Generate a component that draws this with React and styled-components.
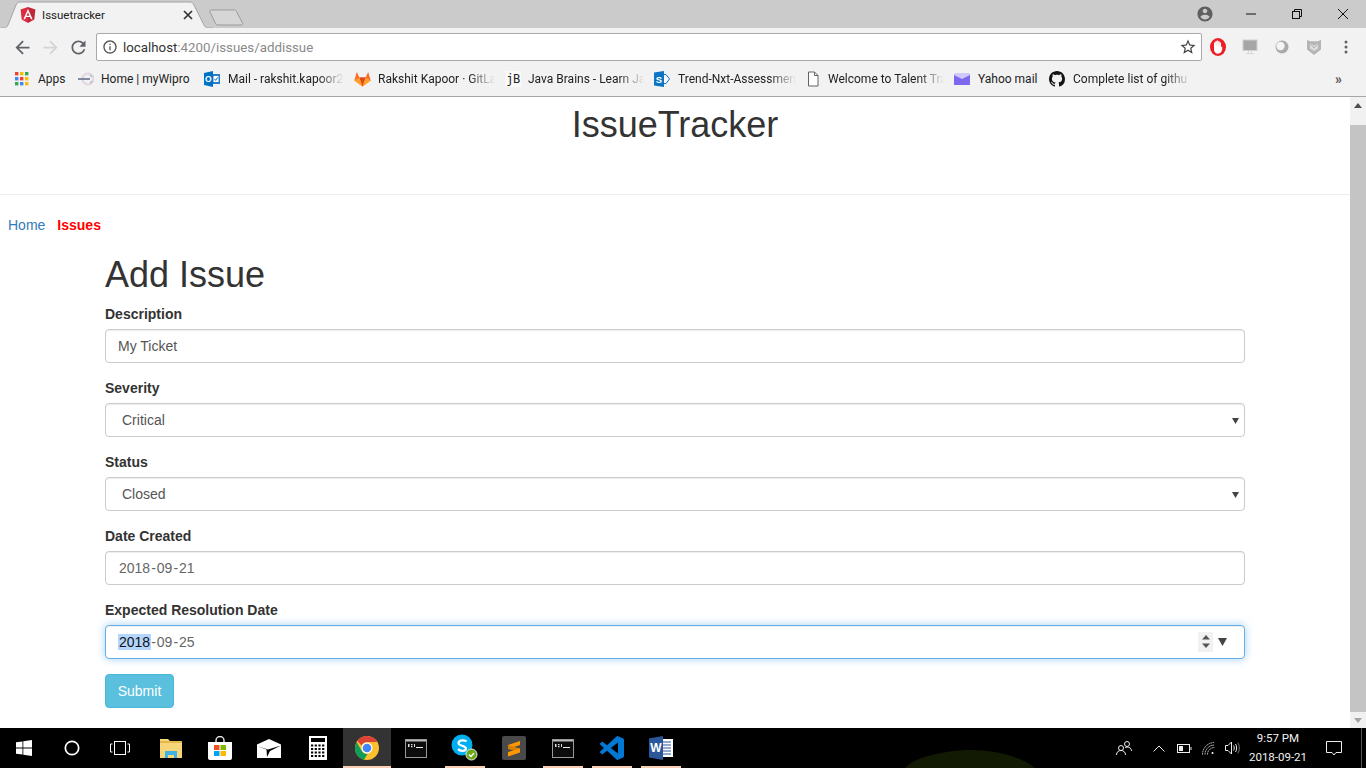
import React from 'react';
import styled, { createGlobalStyle } from 'styled-components';

const GlobalStyle = createGlobalStyle`
  html, body {
    margin: 0;
    height: 100%;
    overflow: hidden;
    font-family: "Liberation Sans", Arial, sans-serif;
    font-size: 14px;
    color: #333;
  }
  * { box-sizing: border-box; }
`;

const chromeFont = `Roboto, "Open Sans", sans-serif`;

const Screen = styled.div`
  height: 768px;
  display: flex;
  flex-direction: column;
  overflow: hidden;
  background: #fff;
`;

/* browser chrome */
const TabStrip = styled.div`
  flex: none;
  height: 28px;
  background: #cbcbcb;
  display: flex;
  align-items: flex-end;
  padding-left: 1px;
`;

const Tab = styled.div`
  position: relative;
  width: 212px;
  height: 27px;
  display: flex;
  align-items: center;
  padding: 0 20px 0 19px;
  font: 11.5px ${chromeFont};
  color: #222;
`;

const TabShape = styled.svg`
  position: absolute;
  left: 0;
  top: 0;
`;

const TabLabel = styled.span`
  position: relative;
  flex: 1;
  margin-left: 6px;
`;

const TabIcon = styled.svg`
  position: relative;
  flex: none;
`;

const NewTab = styled.svg`
  flex: none;
  margin: 0 0 2px -5px;
`;

const WindowControls = styled.div`
  margin-left: auto;
  align-self: flex-start;
  display: flex;
  align-items: center;
  height: 28px;
`;

const WinButton = styled.div`
  width: 46px;
  height: 26px;
  display: flex;
  align-items: center;
  justify-content: center;
`;

const Toolbar = styled.div`
  flex: none;
  height: 34px;
  padding-top: 4px;
  background: #f2f2f2;
  display: flex;
  align-items: center;
`;

const NavButton = styled.div`
  flex: none;
  width: 28px;
  height: 28px;
  display: flex;
  align-items: center;
  justify-content: center;
`;

const NavGroup = styled.div`
  display: flex;
  padding: 0 4px 0 8px;
`;

const Omnibox = styled.div`
  flex: none;
  width: 1106px;
  height: 28px;
  background: #fff;
  border: 1px solid #a9a9a9;
  border-radius: 2px;
  display: flex;
  align-items: center;
  padding: 0 4px 0 5px;
  font: 13.3px ${chromeFont};
  color: #333;
`;

const Url = styled.span`
  margin-left: 5px;
  flex: 1;
  span { color: #8a8a8a; }
`;

const Extensions = styled.div`
  display: flex;
  align-items: center;
`;

const ExtButton = styled.div`
  width: 32px;
  height: 28px;
  display: flex;
  align-items: center;
  justify-content: center;
`;

const BookmarkBar = styled.div`
  flex: none;
  height: 35px;
  background: #f2f2f2;
  border-bottom: 1px solid #a6a6a6;
  display: flex;
  align-items: center;
  padding: 0 0 0 15px;
  font: 12px ${chromeFont};
  color: #222;
`;

const Bookmark = styled.div`
  flex: none;
  width: ${p => p.$width}px;
  padding-right: ${p => (p.$fade ? 10 : 0)}px;
  display: flex;
  align-items: center;
  gap: ${p => p.$gap || 8}px;
`;

const BookmarkIcon = styled.span`
  flex: none;
  display: flex;
`;

const BookmarkText = styled.span`
  flex: 1;
  min-width: 0;
  white-space: nowrap;
  ${p => p.$fade && `mask-image: linear-gradient(to right, #000 78%, transparent 100%);`}
`;

const JbIcon = styled.span`
  width: 16px;
  height: 16px;
  font: 12px "DejaVu Sans Mono", monospace;
  color: #222;
  background: #fafafa;
  text-align: center;
  line-height: 16px;
  letter-spacing: -0.5px;
`;

const More = styled.div`
  margin-left: auto;
  margin-right: 24px;
  font: 700 14px ${chromeFont};
  color: #555;
`;

/* page */
const Viewport = styled.div`
  flex: 1;
  min-height: 0;
  display: flex;
`;

const Page = styled.main`
  flex: 1;
  min-width: 0;
`;

const Scrollbar = styled.div`
  flex: none;
  width: 16px;
  background: #f1f1f1;
  display: flex;
  flex-direction: column;
`;

const ScrollArrow = styled.div`
  flex: none;
  height: 16px;
  display: flex;
  align-items: center;
  justify-content: center;
`;

const ScrollThumb = styled.div`
  flex: none;
  height: 587px;
  margin: 12px 0 auto;
  background: #c4c4c4;
`;

const Header = styled.header`
  height: 98px;
  border-bottom: 1px solid #eee;
  padding-top: 8px;
`;

const Title = styled.h1`
  margin: 0;
  font-size: 36px;
  font-weight: 400;
  line-height: 39.6px;
  text-align: center;
`;

const SiteNav = styled.nav`
  display: flex;
  gap: 12px;
  margin: 20px 0;
  padding-left: 8px;
  line-height: 20px;
`;

const NavLink = styled.a`
  color: ${p => (p.$current ? '#f00' : '#337ab7')};
  font-weight: ${p => (p.$current ? 700 : 400)};
`;

const Container = styled.section`
  width: 1140px;
  margin: 0 auto;
`;

const FormTitle = styled.h2`
  margin: 0 0 9px;
  font-size: 36px;
  font-weight: 400;
  line-height: 39.6px;
`;

const Group = styled.div`
  margin-bottom: 15px;
`;

const Label = styled.label`
  display: block;
  margin-bottom: 5px;
  font-weight: 700;
  line-height: 20px;
`;

const Input = styled.input`
  display: block;
  width: 100%;
  height: 34px;
  padding: 6px 12px;
  font: 14px "Liberation Sans", Arial, sans-serif;
  color: #555;
  background: #fff;
  border: 1px solid #ccc;
  border-radius: 4px;
  box-shadow: inset 0 1px 1px rgba(0, 0, 0, .075);
  outline: none;
`;

const SelectWrap = styled.div`
  position: relative;
`;

const Select = styled.select`
  display: block;
  width: 100%;
  height: 34px;
  padding: 6px 12px 6px 16px;
  font: 14px "Liberation Sans", Arial, sans-serif;
  color: #555;
  background: #fff;
  border: 1px solid #ccc;
  border-radius: 4px;
  box-shadow: inset 0 1px 1px rgba(0, 0, 0, .075);
  appearance: none;
  outline: none;
`;

const SelectArrow = styled.svg`
  position: absolute;
  right: 6px;
  top: 15px;
  pointer-events: none;
`;

const DateField = styled.div`
  height: 34px;
  display: flex;
  align-items: center;
  padding: 0 12px;
  color: #666;
  background: #fff;
  border: 1px solid ${p => (p.$focused ? '#66afe9' : '#ccc')};
  border-radius: 4px;
  box-shadow: ${p => (p.$focused
    ? 'inset 0 1px 1px rgba(0,0,0,.075), 0 0 8px rgba(102,175,233,.6)'
    : 'inset 0 1px 1px rgba(0,0,0,.075)')};
`;

const DatePart = styled.span`
  padding: 0 1px;
  line-height: 16px;
  ${p => p.$selected && `background: #b4d5fe; color: #111;`}
`;

const DateControls = styled.div`
  margin-left: auto;
  display: flex;
  align-items: center;
  gap: 5px;
  padding-right: 5px;
`;

const Spinner = styled.div`
  width: 15px;
  height: 20px;
  background: #f1f1f1;
  display: flex;
  align-items: center;
  justify-content: center;
`;

const Submit = styled.button`
  display: block;
  width: 69px;
  height: 34px;
  padding: 0;
  font: 14px "Liberation Sans", Arial, sans-serif;
  color: #fff;
  background: #5bc0de;
  border: 1px solid #46b8da;
  border-radius: 4px;
`;

/* windows taskbar */
const Taskbar = styled.footer`
  position: relative;
  flex: none;
  height: 40px;
  background: #000;
  display: flex;
  align-items: stretch;
  color: #fff;
`;

const Wallpaper = styled.svg`
  position: absolute;
  left: 900px;
  bottom: 0;
`;

const TaskGroup = styled.div`
  display: flex;
  margin-right: 3px;
`;

const TaskItem = styled.div`
  position: relative;
  width: 48px;
  margin-right: ${p => (p.$tight ? 0 : 1)}px;
  display: flex;
  align-items: center;
  justify-content: center;
  background: ${p => (p.$active ? '#333' : 'transparent')};

  ${p => p.$running && `
    &::after {
      content: "";
      position: absolute;
      left: ${p.$active ? 0 : 4}px;
      right: ${p.$active ? 0 : 4}px;
      bottom: 0;
      height: 2px;
      background: #f8cfb3;
    }
  `}
`;

const Tray = styled.div`
  position: relative;
  margin-left: auto;
  display: flex;
  align-items: center;
`;

const TrayIcon = styled.div`
  width: ${p => p.$width}px;
  padding-right: ${p => p.$inset || 0}px;
  display: flex;
  align-items: center;
  justify-content: center;
`;

const Clock = styled.div`
  width: 72px;
  text-align: center;
  font: 11.5px/19px ${chromeFont};
  color: #f2f2f2;
`;

const ShowDesktop = styled.div`
  width: 5px;
  align-self: stretch;
  border-left: 1px solid #555;
`;

const Arrow = ({ d, color }) => (
  <svg width="21" height="21" viewBox="0 0 24 24" fill={color}><path d={d} /></svg>
);

const BACK = 'M20 11H7.83l5.59-5.59L12 4l-8 8 8 8 1.41-1.41L7.83 13H20v-2z';
const FORWARD = 'M12 4l-1.41 1.41L16.17 11H4v2h12.17l-5.58 5.59L12 20l8-8z';
const RELOAD = 'M17.65 6.35C16.2 4.9 14.21 4 12 4c-4.42 0-7.99 3.58-7.99 8s3.57 8 7.99 8c3.73 0 6.84-2.55 7.73-6h-2.08c-.82 2.33-3.04 4-5.65 4-3.31 0-6-2.69-6-6s2.69-6 6-6c1.66 0 3.14.69 4.22 1.78L13 11h7V4l-2.35 2.35z';

const AngularIcon = () => (
  <TabIcon width="16" height="16" viewBox="0 0 16 16">
    <path d="M8 0 .6 2.6l1.1 9.8L8 16z" fill="#dd2c3f" />
    <path d="M8 0l7.4 2.6-1.1 9.8L8 16z" fill="#c0283a" />
    <path d="M8 2 3.4 12.3h1.7l.9-2.3h4l.9 2.3h1.7zM6.6 8.7 8 5.3l1.4 3.4z" fill="#fff" />
  </TabIcon>
);

const AppsIcon = () => {
  const colors = ['#ea4335', '#fbbc05', '#34a853', '#4285f4', '#ea4335', '#fbbc05', '#34a853', '#4285f4', '#fbbc05'];
  return (
    <svg width="14" height="14" viewBox="0 0 14 14">
      {colors.map((c, i) => (
        <rect key={i} x={(i % 3) * 5} y={Math.floor(i / 3) * 5} width="3.4" height="3.4" fill={c} />
      ))}
    </svg>
  );
};

const WiproIcon = () => (
  <svg width="16" height="16" viewBox="0 0 16 16">
    <circle cx="10" cy="8" r="5.5" fill="none" stroke="#e3d3df" strokeWidth="2" />
    <path d="M0 8h12" stroke="#6a6f90" strokeWidth="1.6" />
    <path d="M12 4l2 2M12 12l2-2" stroke="#9cc5cf" strokeWidth="1.4" />
  </svg>
);

const OutlookIcon = () => (
  <svg width="16" height="16" viewBox="0 0 16 16">
    <rect x="6" y="3" width="10" height="10" fill="#2a7cc7" />
    <rect x="9.5" y="5" width="5" height="6" fill="#fff" />
    <path d="M10.5 8l1.2 1.4 2-3" fill="none" stroke="#0072c6" strokeWidth="1" />
    <path d="M0 2l9-2v16L0 14z" fill="#0072c6" />
    <text x="4.4" y="11" fontSize="8.5" fontWeight="700" fontFamily="Liberation Sans" textAnchor="middle" fill="#fff">O</text>
  </svg>
);

const GitlabIcon = () => (
  <svg width="17" height="16" viewBox="0 0 17 16">
    <path d="M8.5 15.5 .3 9.6 2.8 1l2.6 5.6h6.2L14.200 1l2.500 8.600z" fill="#fc6d26" />
    <path d="M8.5 15.5 5.4 6.6h6.2z" fill="#e24329" />
    <path d="M8.5 15.5 .3 9.6l5.1-3zM8.5 15.5l8.2-5.9-5.1-3z" fill="#fca326" />
  </svg>
);

const SharepointIcon = () => (
  <svg width="16" height="16" viewBox="0 0 16 16">
    <path d="M9 3.500h3L15.500 8 12 12.500H9z" fill="#fff" stroke="#0b74c4" />
    <path d="M0 1.600 10 0v16L0 14.400z" fill="#0b74c4" />
    <text x="5" y="11.500" fontSize="9.500" fontWeight="700" fontFamily="Liberation Sans" textAnchor="middle" fill="#fff">S</text>
  </svg>
);

const DocIcon = () => (
  <svg width="14" height="16" viewBox="0 0 14 16">
    <path d="M2.500 1h6l3.500 3.500V15H2.500z" fill="#fff" stroke="#5f6368" />
    <path d="M8.500 1v3.500H12" fill="none" stroke="#5f6368" />
  </svg>
);

const MailIcon = () => (
  <svg width="16" height="12" viewBox="0 0 16 12">
    <rect y="1" width="16" height="11" fill="#7b68ee" />
    <path d="M1 0h14l1 2-8 4-8-4z" fill="#cfc8ff" />
  </svg>
);

const GithubIcon = () => (
  <svg width="16" height="16" viewBox="0 0 16 16" fill="#161514">
    <path d="M8 0C3.58 0 0 3.58 0 8c0 3.54 2.29 6.53 5.47 7.59.4.07.55-.17.55-.38 0-.19-.01-.82-.01-1.49-2.01.37-2.530-.49-2.69-.94-.09-.23-.48-.94-.82-1.130-.28-.15-.68-.52-.01-.53.63-.01 1.080.58 1.230.82.720 1.210 1.870.87 2.330.66.070-.52.280-.87.510-1.070-1.780-.2-3.640-.89-3.640-3.950 0-.87.310-1.590.820-2.150-.08-.2-.36-1.020.080-2.120 0 0 .670-.21 2.200.82.640-.18 1.320-.27 2-.27s1.360.09 2 .27c1.530-1.040 2.200-.82 2.200-.82.440 1.100.160 1.920.080 2.120.510.560.820 1.270.820 2.150 0 3.070-1.870 3.750-3.650 3.950.290.250.540.730.540 1.480 0 1.070-.010 1.930-.010 2.200 0 .210.150.460.550.380A8.013 8.013 0 0 0 16 8c0-4.420-3.580-8-8-8z" />
  </svg>
);

const OperaIcon = () => (
  <svg width="16" height="18" viewBox="0 0 16 18">
    <ellipse cx="8" cy="9" rx="8" ry="9" fill="#ee1c25" />
    <path d="M4 8V4.500h1.300V3.200h1.400V2.500h1.400v.7h1.400v1.300H11V9.500l1.200-1.500v3.500c-.5 2.500-2 4-4 4.300-2.500 0-4.200-2-4.200-4.300z" fill="#fff" />
    <path d="M6 3.500v4M8 3v4.500M9.800 3.500v4" stroke="#f6b5b5" strokeWidth=".5" />
  </svg>
);

const MonitorIcon = () => (
  <svg width="16" height="16" viewBox="0 0 16 16">
    <rect x="1" y="1" width="14" height="10.500" fill="#a6a6a6" stroke="#d0d0d0" />
    <path d="M4 14.500h8M6.500 12v2M9.500 12v2" stroke="#d8d8d8" />
  </svg>
);

const RingIcon = () => (
  <svg width="14" height="14" viewBox="0 0 14 14">
    <circle cx="7" cy="7" r="6.500" fill="#aaa" />
    <circle cx="5.500" cy="6" r="4.200" fill="#f4f4f4" />
  </svg>
);

const ShieldIcon = () => (
  <svg width="14" height="16" viewBox="0 0 14 16">
    <path d="M0 1l3.500 1.200h7L14 1v9.500L7 16 0 10.500z" fill="#b5b5b5" />
    <path d="M3 4.500 7 6.500l4-2V9.500L7 12 3 9.500z" fill="#dcdcdc" />
    <path d="M3 4.500 7 9l4-4.500" fill="none" stroke="#b5b5b5" />
  </svg>
);

const WindowsLogo = () => (
  <svg width="16" height="16" viewBox="0 0 16 16" fill="#fff">
    <path d="M0 2.300 6.500 1.400v6.200H0zM7.300 1.300 16 0v7.600H7.300zM0 8.400h6.500v6.200L0 13.700zM7.300 8.400H16V16l-8.700-1.300z" />
  </svg>
);

const ExplorerIcon = () => (
  <svg width="22" height="20" viewBox="0 0 22 20">
    <path d="M0 1h8l2 2h12v17H0z" fill="#f6d679" />
    <path d="M0 3h22v2H0z" fill="#e7b94c" />
    <path d="M5 20v-7h12v7h-3v-3H8v3z" fill="#3fb3e6" />
  </svg>
);

const StoreIcon = () => (
  <svg width="24" height="24" viewBox="0 0 24 24">
    <path d="M8 7V4.500a4 4 0 0 1 8 0V7" fill="none" stroke="#e8e8e8" strokeWidth="1.400" />
    <path d="M0 6h24v16a2 2 0 0 1-2 2H2a2 2 0 0 1-2-2z" fill="#fff" />
    <rect x="6" y="9" width="5.500" height="5" fill="#f25022" />
    <rect x="12.500" y="9" width="5.500" height="5" fill="#7fba00" />
    <rect x="6" y="15" width="5.500" height="5" fill="#00a4ef" />
    <rect x="12.500" y="15" width="5.500" height="5" fill="#ffb900" />
  </svg>
);

const MailTaskIcon = () => (
  <svg width="24" height="19" viewBox="0 0 24 19">
    <path d="M0 5.500 12 0l12 5.500V19H0z" fill="#fff" />
    <path d="M0 7l11 3.500L24 6.500 13 12l-3 6-.5-7.500z" fill="#000" />
  </svg>
);

const CalcIcon = () => {
  const keys = [];
  for (let y = 0; y < 4; y++) for (let x = 0; x < 4; x++) keys.push([x, y]);
  return (
    <svg width="18" height="24" viewBox="0 0 18 24">
      <rect width="18" height="24" fill="#fff" />
      <rect x="2" y="2" width="14" height="4" fill="#000" />
      {keys.map(([x, y]) => (
        <rect key={`${x}-${y}`} x={2 + x * 3.700} y={8.500 + y * 3.500} width="2.200" height="2" fill="#000" />
      ))}
    </svg>
  );
};

const ChromeIcon = () => (
  <svg width="24" height="24" viewBox="0 0 24 24">
    <circle cx="12" cy="12" r="12" fill="#fbc02d" />
    <path d="M12 0a12 12 0 0 1 10.400 6H12a6 6 0 0 0-5.500 3.500L2.200 5A12 12 0 0 1 12 0z" fill="#db4437" />
    <path d="M1.600 6 6.800 15a6 6 0 0 0 5.700 3l-3.600 5.700A12 12 0 0 1 1.600 6z" fill="#0f9d58" />
    <circle cx="12" cy="12" r="5.500" fill="#fff" />
    <circle cx="12" cy="12" r="4.300" fill="#4285f4" />
  </svg>
);

const CmdIcon = () => (
  <svg width="22" height="19" viewBox="0 0 22 19">
    <rect x=".5" y=".5" width="21" height="18" fill="#0c0c0c" stroke="#9a9a9a" />
    <rect x="1" y="1" width="20" height="1.500" fill="#bbb" />
    <path d="M3 5h1.500v3H3zM6 5h1.500v1.200H6zM6 7h1.500v1.200H6zM9 5h1v3H9z" fill="#ddd" />
    <path d="M11 8.500h7" stroke="#eee" />
  </svg>
);

const SkypeIcon = () => (
  <svg width="28" height="28" viewBox="0 0 28 28">
    <circle cx="11" cy="11" r="10.500" fill="#00aff0" />
    <path d="M15.500 7.500C14.500 6 8 5.500 7.500 9c-.4 3 7.500 2.500 7.500 5.500 0 3-6 3-8 .5" fill="none" stroke="#fff" strokeWidth="2.200" />
    <circle cx="20.500" cy="20.500" r="5.500" fill="#6aa917" stroke="#e9e9e9" />
    <path d="M18 20.500l2 2 3-3.500" fill="none" stroke="#fff" strokeWidth="1.300" />
  </svg>
);

const SublimeIcon = () => (
  <svg width="24" height="24" viewBox="0 0 24 24">
    <rect width="24" height="24" rx="2" fill="#4a4a4a" />
    <path d="M6 13v-4l12-4v4z" fill="#ff9800" />
    <path d="M6 9v4l12 3.500v-4z" fill="#d97f00" />
    <path d="M6 16l12-3.500v4L6 20.500z" fill="#ff9800" />
  </svg>
);

const VscodeIcon = () => (
  <svg width="24" height="24" viewBox="0 0 24 24" fill="#0078d4">
    <path d="M23.150 2.587L18.210.21a1.494 1.494 0 0 0-1.705.29l-9.460 8.630-4.120-3.128a.999.999 0 0 0-1.276.057L.327 7.261A1 1 0 0 0 .326 8.740L3.899 12 .326 15.260a1 1 0 0 0 .001 1.479L1.650 17.940a.999.999 0 0 0 1.276.057l4.120-3.128 9.460 8.630a1.492 1.492 0 0 0 1.704.29l4.942-2.377A1.500 1.500 0 0 0 24 20.060V3.939a1.500 1.500 0 0 0-.850-1.352zm-5.146 14.861L10.826 12l7.178-5.448v10.896z" />
  </svg>
);

const WordIcon = () => (
  <svg width="24" height="24" viewBox="0 0 24 24">
    <rect x="10" y="3" width="14" height="18" fill="#fff" />
    <path d="M13 6h9M13 9h9M13 12h9M13 15h9M13 18h9" stroke="#2b579a" />
    <path d="M0 2.500 14 0v24L0 21.500z" fill="#2b579a" />
    <text x="7" y="16" fontSize="12" fontWeight="700" fontFamily="Liberation Sans" textAnchor="middle" fill="#fff">W</text>
  </svg>
);

const SelectCaret = () => (
  <SelectArrow width="7" height="6" viewBox="0 0 7 6"><path d="M0 0h7L3.500 6z" fill="#444" /></SelectArrow>
);

// labels stop where the bar fades them out in the browser
const bookmarks = [
  { label: 'Apps', icon: <AppsIcon />, width: 63, gap: 9 },
  { label: 'Home | myWipro', icon: <WiproIcon />, width: 126, gap: 7 },
  { label: 'Mail - rakshit.kapoor2', icon: <OutlookIcon />, width: 150, fade: true },
  { label: 'Rakshit Kapoor · GitLa', icon: <GitlabIcon />, width: 151, gap: 7, fade: true },
  { label: 'Java Brains - Learn Ja', icon: <JbIcon>jB</JbIcon>, width: 149, gap: 7, fade: true },
  { label: 'Trend-Nxt-Assessmen', icon: <SharepointIcon />, width: 152, fade: true },
  { label: 'Welcome to Talent Tra', icon: <DocIcon />, width: 148, fade: true },
  { label: 'Yahoo mail', icon: <MailIcon />, width: 95 },
  { label: 'Complete list of githu', icon: <GithubIcon />, width: 152, fade: true },
];

export default function App() {
  return (
    <Screen>
      <GlobalStyle />

      <TabStrip>
        <Tab>
          <TabShape width="212" height="27" viewBox="0 0 212 27">
            <path d="M0 27h3c2 0 3-1 4-3L15 4c1-2 2-3 4-3h170c2 0 3 1 4 3l10 20c1 2 2 3 4 3h5" fill="#f2f2f2" stroke="#a3a3a3" />
          </TabShape>
          <AngularIcon />
          <TabLabel>Issuetracker</TabLabel>
          <TabIcon width="10" height="10" viewBox="0 0 10 10">
            <path d="M1 1l8 8M9 1l-8 8" stroke="#333" strokeWidth="1.700" />
          </TabIcon>
        </Tab>
        <NewTab width="36" height="17" viewBox="0 0 36 17">
          <path d="M3 1h23c1 0 2 .5 2.500 1.500L34.500 14c.5 1 0 2-1.500 2H10c-1 0-2-.5-2.500-1.500L2 3c-.5-1 0-2 1-2z" fill="#d6d6d6" stroke="#9b9b9b" />
        </NewTab>
        <WindowControls>
          <WinButton>
            <svg width="18" height="18" viewBox="0 0 24 24" fill="#5f5f5f">
              <path d="M12 2C6.480 2 2 6.480 2 12s4.480 10 10 10 10-4.480 10-10S17.520 2 12 2zm0 3c1.660 0 3 1.340 3 3s-1.340 3-3 3-3-1.340-3-3 1.340-3 3-3zm0 14.200c-2.500 0-4.710-1.280-6-3.220.030-1.990 4-3.080 6-3.080 1.990 0 5.970 1.090 6 3.080-1.290 1.940-3.500 3.220-6 3.220z" />
            </svg>
          </WinButton>
          <WinButton>
            <svg width="10" height="2" viewBox="0 0 10 2"><path d="M0 1h10" stroke="#111" /></svg>
          </WinButton>
          <WinButton>
            <svg width="10" height="10" viewBox="0 0 10 10" fill="none" stroke="#111">
              <rect x=".5" y="2.500" width="7" height="7" />
              <path d="M2.500 2.500v-2h7v7h-2" />
            </svg>
          </WinButton>
          <WinButton>
            <svg width="10" height="10" viewBox="0 0 10 10"><path d="M0 0l10 10M10 0L0 10" stroke="#111" /></svg>
          </WinButton>
        </WindowControls>
      </TabStrip>

      <Toolbar>
        <NavGroup>
          <NavButton><Arrow d={BACK} color="#5f6368" /></NavButton>
          <NavButton><Arrow d={FORWARD} color="#d4d4d4" /></NavButton>
          <NavButton><Arrow d={RELOAD} color="#5f6368" /></NavButton>
        </NavGroup>
        <Omnibox>
          <svg width="16" height="16" viewBox="0 0 24 24" fill="#555">
            <path d="M11 7h2v2h-2zm0 4h2v6h-2zm1-9C6.480 2 2 6.480 2 12s4.480 10 10 10 10-4.480 10-10S17.520 2 12 2zm0 18c-4.410 0-8-3.590-8-8s3.590-8 8-8 8 3.590 8 8-3.590 8-8 8z" />
          </svg>
          <Url>localhost<span>:4200/issues/addissue</span></Url>
          <svg width="18" height="18" viewBox="0 0 24 24" fill="#444">
            <path d="M22 9.240l-7.190-.62L12 2 9.190 8.630 2 9.240l5.460 4.730L5.820 21 12 17.270 18.180 21l-1.630-7.030L22 9.240zM12 15.400l-3.760 2.270 1-4.280-3.320-2.880 4.380-.38L12 6.100l1.710 4.040 4.380.38-3.320 2.880 1 4.280L12 15.400z" />
          </svg>
        </Omnibox>
        <Extensions>
          <ExtButton><OperaIcon /></ExtButton>
          <ExtButton><MonitorIcon /></ExtButton>
          <ExtButton><RingIcon /></ExtButton>
          <ExtButton><ShieldIcon /></ExtButton>
          <ExtButton>
            <svg width="4" height="14" viewBox="0 0 4 14" fill="#5f6368">
              <circle cx="2" cy="2" r="1.500" /><circle cx="2" cy="7" r="1.500" /><circle cx="2" cy="12" r="1.500" />
            </svg>
          </ExtButton>
        </Extensions>
      </Toolbar>

      <BookmarkBar>
        {bookmarks.map(b => (
          <Bookmark key={b.label} $width={b.width} $gap={b.gap} $fade={b.fade}>
            <BookmarkIcon>{b.icon}</BookmarkIcon>
            <BookmarkText $fade={b.fade}>{b.label}</BookmarkText>
          </Bookmark>
        ))}
        <More>»</More>
      </BookmarkBar>

      <Viewport>
        <Page>
          <Header><Title>IssueTracker</Title></Header>
          <SiteNav>
            <NavLink>Home</NavLink>
            <NavLink $current>Issues</NavLink>
          </SiteNav>
          <Container>
            <FormTitle>Add Issue</FormTitle>
            <Group>
              <Label>Description</Label>
              <Input value="My Ticket" readOnly />
            </Group>
            <Group>
              <Label>Severity</Label>
              <SelectWrap>
                <Select defaultValue="Critical"><option>Critical</option><option>High</option><option>Low</option></Select>
                <SelectCaret />
              </SelectWrap>
            </Group>
            <Group>
              <Label>Status</Label>
              <SelectWrap>
                <Select defaultValue="Closed"><option>Open</option><option>Closed</option></Select>
                <SelectCaret />
              </SelectWrap>
            </Group>
            <Group>
              <Label>Date Created</Label>
              <DateField>
                <DatePart>2018</DatePart>-<DatePart>09</DatePart>-<DatePart>21</DatePart>
              </DateField>
            </Group>
            <Group>
              <Label>Expected Resolution Date</Label>
              <DateField $focused>
                <DatePart $selected>2018</DatePart>-<DatePart>09</DatePart>-<DatePart>25</DatePart>
                <DateControls>
                  <Spinner>
                    <svg width="8" height="13" viewBox="0 0 8 13" fill="#555">
                      <path d="M0 4.500h8L4 0zM0 8.500h8L4 13z" />
                    </svg>
                  </Spinner>
                  <svg width="9" height="8" viewBox="0 0 9 8" fill="#444"><path d="M0 0h9L4.500 8z" /></svg>
                </DateControls>
              </DateField>
            </Group>
            <Submit>Submit</Submit>
          </Container>
        </Page>
        <Scrollbar>
          <ScrollArrow>
            <svg width="8" height="5" viewBox="0 0 8 5" fill="#505050"><path d="M0 5h8L4 0z" /></svg>
          </ScrollArrow>
          <ScrollThumb />
          <ScrollArrow>
            <svg width="8" height="5" viewBox="0 0 8 5" fill="#a3a3a3"><path d="M0 0h8L4 5z" /></svg>
          </ScrollArrow>
        </Scrollbar>
      </Viewport>

      <Taskbar>
        <Wallpaper width="140" height="20" viewBox="0 0 140 20">
          <path d="M5 20C15 8 50 2 70 2c25 0 50 6 65 18z" fill="#121a04" />
        </Wallpaper>
        <TaskGroup>
          <TaskItem $tight><WindowsLogo /></TaskItem>
          <TaskItem $tight>
            <svg width="16" height="16" viewBox="0 0 16 16"><circle cx="8" cy="8" r="6.700" fill="none" stroke="#fff" strokeWidth="1.700" /></svg>
          </TaskItem>
          <TaskItem $tight>
            <svg width="20" height="14" viewBox="0 0 20 14" fill="none" stroke="#fff">
              <rect x="4.500" y=".5" width="11" height="13" />
              <path d="M2.500 3H.5v8h2M17.500 3h2v8h-2" />
            </svg>
          </TaskItem>
        </TaskGroup>
        <TaskGroup>
          <TaskItem><ExplorerIcon /></TaskItem>
          <TaskItem><StoreIcon /></TaskItem>
          <TaskItem><MailTaskIcon /></TaskItem>
          <TaskItem><CalcIcon /></TaskItem>
          <TaskItem $active $running><ChromeIcon /></TaskItem>
          <TaskItem><CmdIcon /></TaskItem>
          <TaskItem $running><SkypeIcon /></TaskItem>
          <TaskItem><SublimeIcon /></TaskItem>
          <TaskItem $running><CmdIcon /></TaskItem>
          <TaskItem $running><VscodeIcon /></TaskItem>
          <TaskItem $running><WordIcon /></TaskItem>
        </TaskGroup>
        <Tray>
          <TrayIcon $width={37}>
            <svg width="16" height="16" viewBox="0 0 16 16" fill="none" stroke="#eee">
              <circle cx="11" cy="4" r="2.500" /><circle cx="5" cy="8" r="2.500" />
              <path d="M.5 15c0-3 2-4.500 4.500-4.500S9.500 12 9.500 15M9 8c.5-.5 1-1 2-1 2.500 0 4.500 1.500 4.500 4" />
            </svg>
          </TrayIcon>
          <TrayIcon $width={34}>
            <svg width="12" height="7" viewBox="0 0 12 7" fill="none" stroke="#eee"><path d="M.5 6.500 6 1l5.500 5.500" /></svg>
          </TrayIcon>
          <TrayIcon $width={16}>
            <svg width="15" height="9" viewBox="0 0 15 9" fill="none" stroke="#eee">
              <rect x=".5" y=".5" width="12" height="8" />
              <rect x="2" y="2" width="4" height="5" fill="#eee" stroke="none" />
              <path d="M14 3v3" />
            </svg>
          </TrayIcon>
          <TrayIcon $width={32}>
            <svg width="13" height="13" viewBox="0 0 13 13" fill="none" stroke="#ccc">
              <path d="M.5 12.500A12 12 0 0 1 12.500 .5M3 12.500A9.500 9.500 0 0 1 12.500 3M5.500 12.500A7 7 0 0 1 12.500 5.500" strokeDasharray="1.500 .6" />
              <circle cx="10.500" cy="11" r="1" fill="#fff" stroke="none" />
            </svg>
          </TrayIcon>
          <TrayIcon $width={18}>
            <svg width="16" height="14" viewBox="0 0 16 14" fill="none" stroke="#eee">
              <path d="M.5 4.500h2.500L6.500 1v12L3 9.500H.5z" />
              <path d="M8.500 4.500c1 1.500 1 3.500 0 5M10.500 3c1.500 2 1.500 6 0 8" />
              <path d="M12.800 1.500c2 3 2 8 0 11" stroke="#777" />
            </svg>
          </TrayIcon>
          <Clock>9:57 PM<br />2018-09-21</Clock>
          <TrayIcon $width={47} $inset={7}>
            <svg width="16" height="15" viewBox="0 0 16 15" fill="none" stroke="#eee">
              <path d="M.5.5h15v11H10L8 14l-2-2.500H.5z" />
            </svg>
          </TrayIcon>
          <ShowDesktop />
        </Tray>
      </Taskbar>
    </Screen>
  );
}
